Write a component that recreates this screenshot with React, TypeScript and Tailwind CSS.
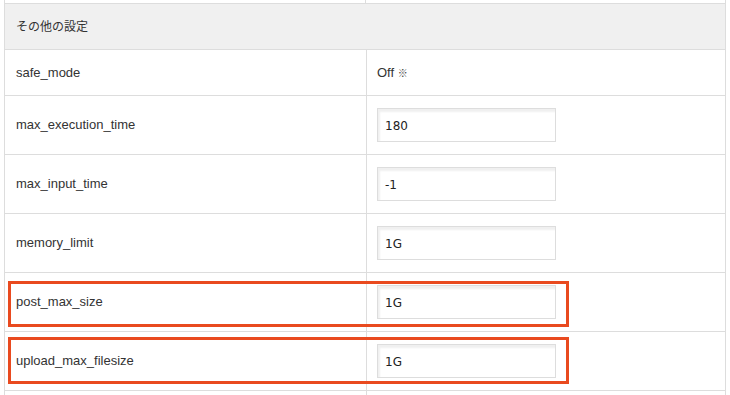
import React from 'react';

// PHP設定の行データ
interface SettingRow {
  name: string;
  value?: string;
  text?: string;
}

const rows: SettingRow[] = [
  { name: 'safe_mode', text: 'Off' },
  { name: 'max_execution_time', value: '180' },
  { name: 'max_input_time', value: '-1' },
  { name: 'memory_limit', value: '1G' },
  { name: 'post_max_size', value: '1G' },
  { name: 'upload_max_filesize', value: '1G' },
];

export default function App() {
  return (
    <div className="w-[730px] h-[395px] overflow-hidden bg-white text-[#333] font-['Liberation_Sans','Noto_Sans_CJK_JP',sans-serif]">
      <div className="relative ml-[4px] w-[722px]">
        {/* 上に続く行の名残 */}
        <div className="flex h-[3px] border-x border-[#ddd]">
          <div className="w-[361px] border-r border-[#ddd]" />
          <div className="flex-1" />
        </div>

        <table className="w-full border-collapse text-[13px]">
          <tbody>
            <tr>
              <th
                colSpan={2}
                className="h-[46px] border border-[#ddd] bg-[#f0f0f0] pl-[11px] text-left text-[12px] font-normal"
              >
                その他の設定
              </th>
            </tr>
            {rows.map((row) => (
              <tr key={row.name}>
                <td className={`w-[362px] border border-[#ddd] pl-[11px] ${row.value ? 'h-[59px]' : 'h-[46px]'}`}>
                  {row.name}
                </td>
                <td className="border border-[#ddd] pl-[10px]">
                  {row.value ? (
                    <input
                      type="text"
                      defaultValue={row.value}
                      className="block h-[34px] w-[179px] border border-[#ddd] bg-white px-[7px] pt-[1px] text-[12px] text-[#222] shadow-[inset_2px_3px_2px_#f0f0f0] outline-none font-['DejaVu_Sans',sans-serif]"
                    />
                  ) : (
                    <span>
                      {row.text} <span className="text-[10px] font-bold text-[#444]">※</span>
                    </span>
                  )}
                </td>
              </tr>
            ))}
            <tr>
              <td className="h-[20px] border border-[#ddd]" />
              <td className="border border-[#ddd]" />
            </tr>
          </tbody>
        </table>

        {/* 注目枠 */}
        <div className="pointer-events-none absolute left-[4px] top-[281px] h-[46px] w-[561px] border-[3px] border-[#e94a1f]" />
        <div className="pointer-events-none absolute left-[4px] top-[337px] h-[47px] w-[561px] border-[3px] border-[#e94a1f]" />
      </div>
    </div>
  );
}
